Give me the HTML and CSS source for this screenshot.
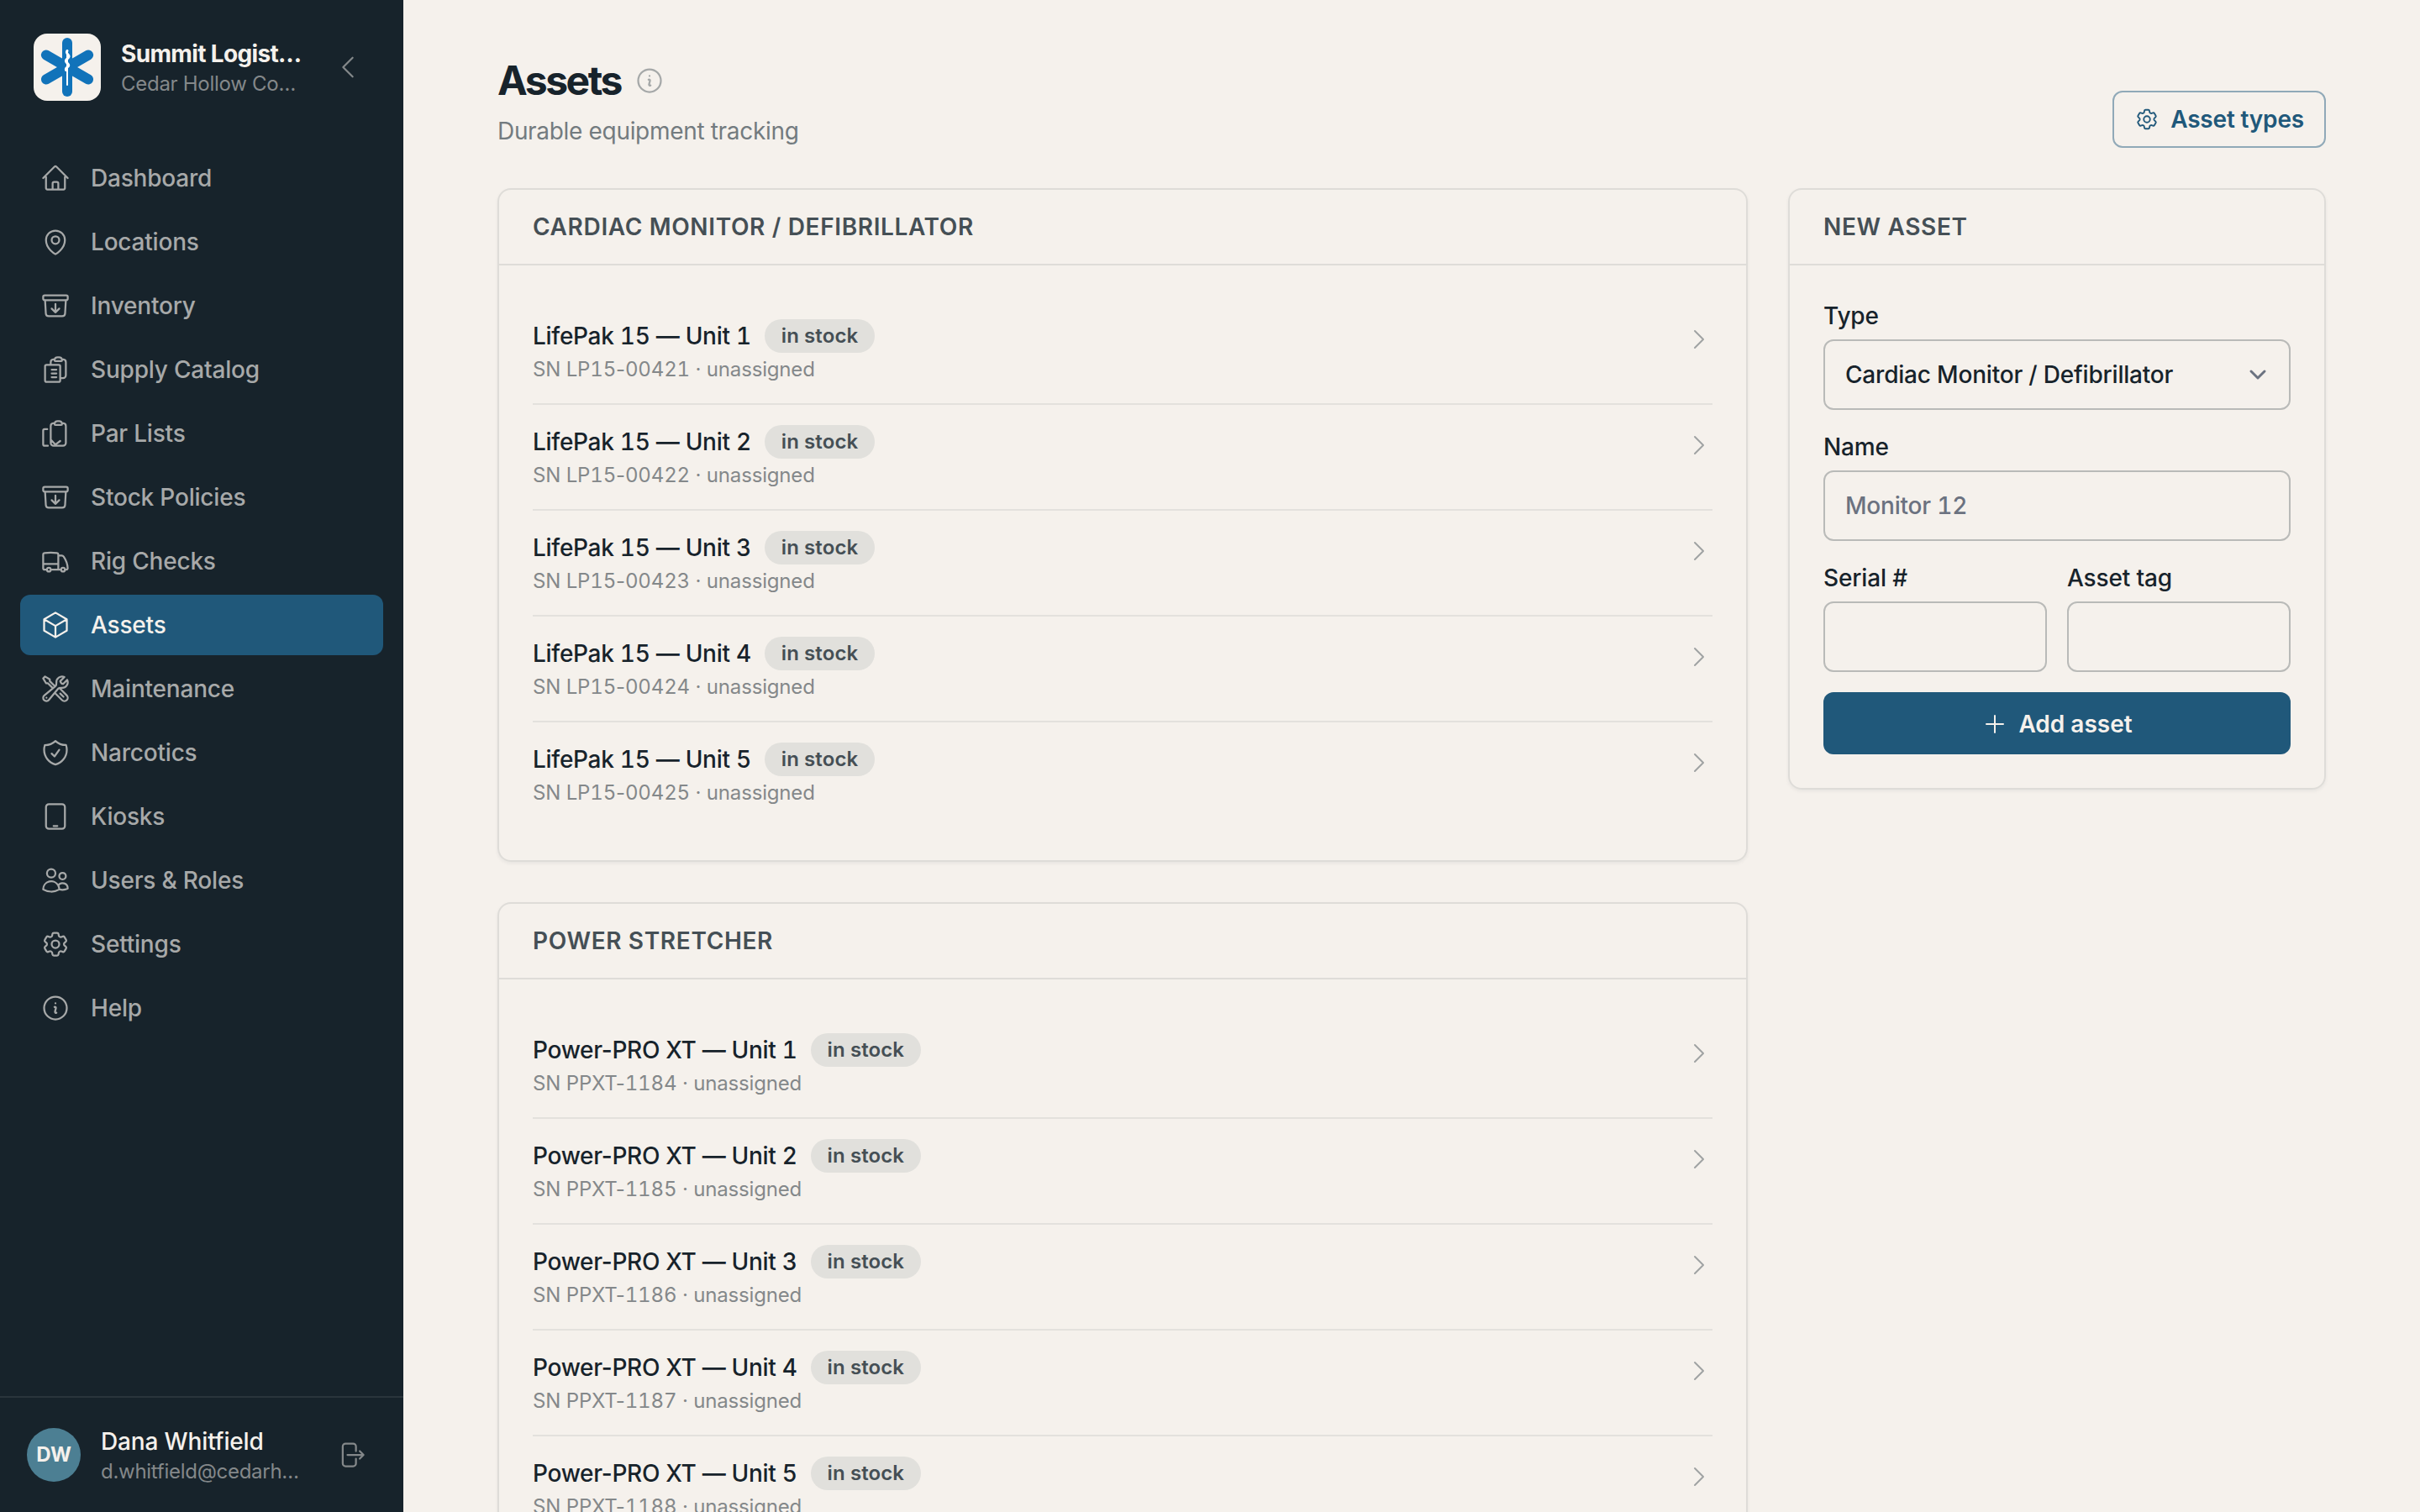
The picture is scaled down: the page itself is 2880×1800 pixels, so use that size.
FILE: index.html
```html
<!DOCTYPE html>
<html lang="en">
<head>
  <meta charset="UTF-8" />
  <meta name="viewport" content="width=device-width, initial-scale=1.0"/>
  <title>Assets</title>
  <link rel="stylesheet" href="styles.css">
</head>
<body>
  <!-- shared icons -->
  <svg class="sprite" aria-hidden="true">
    <symbol id="chevron-right" viewBox="0 0 24 24"><path d="m8.25 4.5 7.5 7.5-7.5 7.5"/></symbol>
    <symbol id="archive" viewBox="0 0 24 24"><path d="m20.25 7.5-.625 10.632a2.25 2.25 0 0 1-2.247 2.118H6.622a2.25 2.25 0 0 1-2.247-2.118L3.75 7.5m8.25 3v6.75m0 0-3-3m3 3 3-3M3.375 7.5h17.25c.621 0 1.125-.504 1.125-1.125v-1.5c0-.621-.504-1.125-1.125-1.125H3.375c-.621 0-1.125.504-1.125 1.125v1.5c0 .621.504 1.125 1.125 1.125Z"/></symbol>
    <symbol id="info" viewBox="0 0 24 24"><path d="m11.25 11.25.041-.02a.75.75 0 0 1 1.063.852l-.708 2.836a.75.75 0 0 0 1.063.853l.041-.021M21 12a9 9 0 1 1-18 0 9 9 0 0 1 18 0Zm-9-3.75h.008v.008H12V8.25Z"/></symbol>
    <symbol id="cog" viewBox="0 0 24 24"><path d="M9.594 3.94c.09-.542.56-.94 1.11-.94h2.593c.55 0 1.02.398 1.11.94l.213 1.281c.063.374.313.686.645.87.074.04.147.083.22.127.325.196.72.257 1.075.124l1.217-.456a1.125 1.125 0 0 1 1.37.49l1.296 2.247a1.125 1.125 0 0 1-.26 1.431l-1.003.827c-.293.241-.438.613-.43.992a7.723 7.723 0 0 1 0 .255c-.008.378.137.75.43.991l1.004.827c.424.35.534.955.26 1.43l-1.298 2.247a1.125 1.125 0 0 1-1.369.491l-1.217-.456c-.355-.133-.75-.072-1.076.124a6.47 6.47 0 0 1-.22.128c-.331.183-.581.495-.644.869l-.213 1.281c-.09.543-.56.94-1.11.94h-2.594c-.55 0-1.019-.398-1.11-.94l-.213-1.281c-.062-.374-.312-.686-.644-.87a6.52 6.52 0 0 1-.22-.127c-.325-.196-.72-.257-1.076-.124l-1.217.456a1.125 1.125 0 0 1-1.369-.49l-1.297-2.247a1.125 1.125 0 0 1 .26-1.431l1.004-.827c.292-.24.437-.613.43-.991a6.932 6.932 0 0 1 0-.255c.007-.38-.138-.751-.43-.992l-1.004-.827a1.125 1.125 0 0 1-.26-1.43l1.297-2.247a1.125 1.125 0 0 1 1.37-.491l1.216.456c.356.133.751.072 1.076-.124.072-.044.146-.086.22-.128.332-.183.582-.495.644-.869l.214-1.28Z"/><path d="M15 12a3 3 0 1 1-6 0 3 3 0 0 1 6 0Z"/></symbol>
  </svg>

  <div class="app">
    <aside class="sidebar">
      <div class="brand">
        <svg class="logo" viewBox="0 0 80 80">
          <g class="star">
            <rect x="34" y="5" width="12" height="70" rx="6"/>
            <rect x="34" y="5" width="12" height="70" rx="6" transform="rotate(60 40 40)"/>
            <rect x="34" y="5" width="12" height="70" rx="6" transform="rotate(-60 40 40)"/>
          </g>
          <path class="staff" d="M40 20v41"/>
          <path class="snake" d="M40 20.5c-1.5 2-.5 3 1 4.500s1.500 3-.5 4.500-3 2.500-1.500 4.500 3.500 2.500 2.500 4.500-4 2-3 5"/>
        </svg>
        <div class="brand-text">
          <div class="brand-name">Summit Logist…</div>
          <div class="brand-sub">Cedar Hollow Co…</div>
        </div>
        <button class="icon-btn"><svg class="icon" viewBox="0 0 24 24"><path d="M15.750 19.500 8.250 12l7.500-7.500"/></svg></button>
      </div>

      <nav class="nav">
        <a class="nav-item"><svg class="icon" viewBox="0 0 24 24"><path d="m2.250 12 8.954-8.955c.44-.439 1.152-.439 1.591 0L21.750 12M4.500 9.750v10.125c0 .621.504 1.125 1.125 1.125H9.750v-4.875c0-.621.504-1.125 1.125-1.125h2.250c.621 0 1.125.504 1.125 1.125V21h4.125c.621 0 1.125-.504 1.125-1.125V9.750M8.250 21h8.250"/></svg>Dashboard</a>
        <a class="nav-item"><svg class="icon" viewBox="0 0 24 24"><path d="M15 10.500a3 3 0 1 1-6 0 3 3 0 0 1 6 0Z"/><path d="M19.500 10.500c0 7.142-7.500 11.250-7.500 11.250S4.500 17.642 4.500 10.500a7.500 7.500 0 1 1 15 0Z"/></svg>Locations</a>
        <a class="nav-item"><svg class="icon"><use href="#archive"/></svg>Inventory</a>
        <a class="nav-item"><svg class="icon" viewBox="0 0 24 24"><path d="M9 12h3.750M9 15h3.750M9 18h3.750m3 .75H18a2.250 2.250 0 0 0 2.250-2.250V6.108c0-1.135-.845-2.098-1.976-2.192a48.424 48.424 0 0 0-1.123-.08m-5.801 0c-.065.21-.1.433-.1.664 0 .414.336.75.75.75h4.500a.75.75 0 0 0 .75-.75 2.250 2.250 0 0 0-.1-.664m-5.800 0A2.251 2.251 0 0 1 13.500 2.250H15c1.012 0 1.867.668 2.150 1.586m-5.800 0c-.376.023-.75.05-1.124.08C9.095 4.010 8.250 4.973 8.250 6.108V8.250m0 0H4.875c-.621 0-1.125.504-1.125 1.125v11.250c0 .621.504 1.125 1.125 1.125h9.750c.621 0 1.125-.504 1.125-1.125V9.375c0-.621-.504-1.125-1.125-1.125H8.250Z"/></svg>Supply Catalog</a>
        <a class="nav-item"><svg class="icon" viewBox="0 0 24 24"><path d="M11.350 3.836c-.065.21-.1.433-.1.664 0 .414.336.75.75.75h4.500a.75.75 0 0 0 .75-.75 2.250 2.250 0 0 0-.1-.664m-5.800 0A2.251 2.251 0 0 1 13.500 2.250H15c1.012 0 1.867.668 2.150 1.586m-5.800 0c-.376.023-.75.05-1.124.08C9.095 4.010 8.250 4.973 8.250 6.108V19.500a2.250 2.250 0 0 0 2.250 2.250H18a2.250 2.250 0 0 0 2.250-2.250V6.108c0-1.135-.845-2.098-1.976-2.192a48.424 48.424 0 0 0-1.124-.08M5.500 8.600H3.375c-.621 0-1.125.504-1.125 1.125v10.900c0 .621.504 1.125 1.125 1.125H6M8.700 17.400l3.200 3.500 3.850-2.900"/></svg>Par Lists</a>
        <a class="nav-item"><svg class="icon"><use href="#archive"/></svg>Stock Policies</a>
        <a class="nav-item"><svg class="icon" viewBox="0 0 24 24"><path d="M8.250 18.750a1.500 1.500 0 0 1-3 0m3 0a1.500 1.500 0 0 0-3 0m3 0h6m-9 0H3.375a1.125 1.125 0 0 1-1.125-1.125V14.250m17.250 4.500a1.500 1.500 0 0 1-3 0m3 0a1.500 1.500 0 0 0-3 0m3 0h1.125c.621 0 1.129-.504 1.090-1.124a17.902 17.902 0 0 0-3.213-9.193 2.056 2.056 0 0 0-1.580-.86H14.250M16.500 18.750h-2.250m0-11.177v-.958c0-.568-.422-1.048-.987-1.106a48.554 48.554 0 0 0-10.026 0 1.106 1.106 0 0 0-.987 1.106v7.635m12-6.677v6.677m0 4.500v-4.500m0 0h-12"/></svg>Rig Checks</a>
        <a class="nav-item active"><svg class="icon" viewBox="0 0 24 24"><path d="m21 7.500-9-5.250L3 7.500m18 0-9 5.250m9-5.250v9l-9 5.250M3 7.500l9 5.250M3 7.500v9l9 5.250m0-9v9"/></svg>Assets</a>
        <a class="nav-item"><svg class="icon" viewBox="0 0 24 24"><path d="M11.420 15.170 17.250 21A2.652 2.652 0 0 0 21 17.250l-5.877-5.877M11.420 15.170l2.496-3.030c.317-.384.74-.626 1.208-.766M11.420 15.170l-4.655 5.653a2.548 2.548 0 1 1-3.586-3.586l6.837-5.630m5.108-.233c.55-.164 1.163-.188 1.743-.14a4.500 4.500 0 0 0 4.486-6.336l-3.276 3.277a3.004 3.004 0 0 1-2.250-2.250l3.276-3.276a4.500 4.500 0 0 0-6.336 4.486c.091 1.076-.071 2.264-.904 2.950l-.102.085m-1.745 1.437L5.909 7.500H4.500L2.250 3.750l1.500-1.500L7.500 4.500v1.409l4.260 4.260m-1.745 1.437 1.745-1.437m6.615 8.206L15.750 15.750M4.867 19.125h.008v.008h-.008v-.008Z"/></svg>Maintenance</a>
        <a class="nav-item"><svg class="icon" viewBox="0 0 24 24"><path d="M9 12.750 11.250 15 15 9.750m-3-7.036A11.959 11.959 0 0 1 3.598 6 11.990 11.990 0 0 0 3 9.749c0 5.592 3.824 10.290 9 11.623 5.176-1.332 9-6.030 9-11.622 0-1.310-.21-2.571-.598-3.751h-.152c-3.196 0-6.100-1.248-8.250-3.285Z"/></svg>Narcotics</a>
        <a class="nav-item"><svg class="icon" viewBox="0 0 24 24"><path d="M10.500 19.500h3m-6.750 2.250h10.500a2.250 2.250 0 0 0 2.250-2.250v-15a2.250 2.250 0 0 0-2.250-2.250H6.750A2.250 2.250 0 0 0 4.500 4.500v15a2.250 2.250 0 0 0 2.250 2.250Z"/></svg>Kiosks</a>
        <a class="nav-item"><svg class="icon" viewBox="0 0 24 24"><path d="M15 19.128a9.380 9.380 0 0 0 2.625.372 9.337 9.337 0 0 0 4.121-.952 4.125 4.125 0 0 0-7.533-2.493M15 19.128v-.003c0-1.113-.285-2.160-.786-3.070M15 19.128v.106A12.318 12.318 0 0 1 8.624 21c-2.331 0-4.512-.645-6.374-1.766l-.001-.109a6.375 6.375 0 0 1 11.964-3.070M12 6.375a3.375 3.375 0 1 1-6.750 0 3.375 3.375 0 0 1 6.750 0Zm8.250 2.250a2.625 2.625 0 1 1-5.250 0 2.625 2.625 0 0 1 5.250 0Z"/></svg>Users &amp; Roles</a>
        <a class="nav-item"><svg class="icon"><use href="#cog"/></svg>Settings</a>
        <a class="nav-item"><svg class="icon"><use href="#info"/></svg>Help</a>
      </nav>

      <div class="user">
        <div class="avatar">DW</div>
        <div class="user-text">
          <div class="user-name">Dana Whitfield</div>
          <div class="user-mail">d.whitfield@cedarh…</div>
        </div>
        <button class="icon-btn"><svg class="icon" viewBox="0 0 24 24"><path d="M15.750 9V5.250A2.250 2.250 0 0 0 13.500 3h-6a2.250 2.250 0 0 0-2.250 2.250v13.500A2.250 2.250 0 0 0 7.500 21h6a2.250 2.250 0 0 0 2.250-2.250V15m3 0 3-3m0 0-3-3m3 3H9"/></svg></button>
      </div>
    </aside>

    <main class="main">
      <header class="page-header">
        <div>
          <h1>Assets <svg class="icon"><use href="#info"/></svg></h1>
          <p>Durable equipment tracking</p>
        </div>
        <button class="btn-outline"><svg class="icon"><use href="#cog"/></svg>Asset types</button>
      </header>

      <div class="columns">
        <div class="groups">
          <section class="card">
            <h2>Cardiac Monitor / Defibrillator</h2>
            <ul class="asset-list">
              <li>
                <div>
                  <div class="asset-name"><span class="num">LifePak 15 — Unit 1</span><span class="pill">in stock</span></div>
                  <div class="asset-sub">SN LP<span class="num">15</span>-<span class="num">00421</span> · unassigned</div>
                </div>
                <svg class="icon"><use href="#chevron-right"/></svg>
              </li>
              <li>
                <div>
                  <div class="asset-name"><span class="num">LifePak 15 — Unit 2</span><span class="pill">in stock</span></div>
                  <div class="asset-sub">SN LP<span class="num">15</span>-<span class="num">00422</span> · unassigned</div>
                </div>
                <svg class="icon"><use href="#chevron-right"/></svg>
              </li>
              <li>
                <div>
                  <div class="asset-name"><span class="num">LifePak 15 — Unit 3</span><span class="pill">in stock</span></div>
                  <div class="asset-sub">SN LP<span class="num">15</span>-<span class="num">00423</span> · unassigned</div>
                </div>
                <svg class="icon"><use href="#chevron-right"/></svg>
              </li>
              <li>
                <div>
                  <div class="asset-name"><span class="num">LifePak 15 — Unit 4</span><span class="pill">in stock</span></div>
                  <div class="asset-sub">SN LP<span class="num">15</span>-<span class="num">00424</span> · unassigned</div>
                </div>
                <svg class="icon"><use href="#chevron-right"/></svg>
              </li>
              <li>
                <div>
                  <div class="asset-name"><span class="num">LifePak 15 — Unit 5</span><span class="pill">in stock</span></div>
                  <div class="asset-sub">SN LP<span class="num">15</span>-<span class="num">00425</span> · unassigned</div>
                </div>
                <svg class="icon"><use href="#chevron-right"/></svg>
              </li>
            </ul>
          </section>

          <section class="card">
            <h2>Power Stretcher</h2>
            <ul class="asset-list">
              <li>
                <div>
                  <div class="asset-name"><span>Power-PRO XT — Unit <span class="num">1</span></span><span class="pill">in stock</span></div>
                  <div class="asset-sub">SN PPXT-<span class="num">1184</span> · unassigned</div>
                </div>
                <svg class="icon"><use href="#chevron-right"/></svg>
              </li>
              <li>
                <div>
                  <div class="asset-name"><span>Power-PRO XT — Unit <span class="num">2</span></span><span class="pill">in stock</span></div>
                  <div class="asset-sub">SN PPXT-<span class="num">1185</span> · unassigned</div>
                </div>
                <svg class="icon"><use href="#chevron-right"/></svg>
              </li>
              <li>
                <div>
                  <div class="asset-name"><span>Power-PRO XT — Unit <span class="num">3</span></span><span class="pill">in stock</span></div>
                  <div class="asset-sub">SN PPXT-<span class="num">1186</span> · unassigned</div>
                </div>
                <svg class="icon"><use href="#chevron-right"/></svg>
              </li>
              <li>
                <div>
                  <div class="asset-name"><span>Power-PRO XT — Unit <span class="num">4</span></span><span class="pill">in stock</span></div>
                  <div class="asset-sub">SN PPXT-<span class="num">1187</span> · unassigned</div>
                </div>
                <svg class="icon"><use href="#chevron-right"/></svg>
              </li>
              <li>
                <div>
                  <div class="asset-name"><span>Power-PRO XT — Unit <span class="num">5</span></span><span class="pill">in stock</span></div>
                  <div class="asset-sub">SN PPXT-<span class="num">1188</span> · unassigned</div>
                </div>
                <svg class="icon"><use href="#chevron-right"/></svg>
              </li>
            </ul>
          </section>
        </div>

        <section class="card">
          <h2>New asset</h2>
          <form class="asset-form">
            <div class="field">
              <label>Type</label>
              <div class="control">Cardiac Monitor / Defibrillator
                <svg class="caret" viewBox="0 0 20 20"><path d="m6 8 4 4 4-4"/></svg>
              </div>
            </div>
            <div class="field">
              <label for="name">Name</label>
              <input class="control" id="name" type="text" placeholder="Monitor 12" />
            </div>
            <div class="field-row">
              <div class="field">
                <label for="serial">Serial #</label>
                <input class="control" id="serial" type="text" />
              </div>
              <div class="field">
                <label for="tag">Asset tag</label>
                <input class="control" id="tag" type="text" />
              </div>
            </div>
            <button class="btn-primary" type="button"><svg class="icon" viewBox="0 0 24 24"><path d="M12 4.500v15m7.500-7.500h-15"/></svg>Add asset</button>
          </form>
        </section>
      </div>
    </main>
  </div>
</body>
</html>
```
FILE: styles.css
```css
* {
  box-sizing: border-box;
}

body {
  margin: 0;
  font-family: Inter, "Liberation Sans", sans-serif;
  font-size: 28px;
  line-height: 40px;
  color: #17232b;
  background: #f5f1ec;
  -webkit-font-smoothing: antialiased;
}

h1, h2, p, ul {
  margin: 0;
  padding: 0;
}

button, input {
  font: inherit;
  color: inherit;
}

.sprite {
  display: none;
}

.icon {
  width: 36px;
  height: 36px;
  flex-shrink: 0;
  fill: none;
  stroke: currentColor;
  stroke-width: 1.5;
  stroke-linecap: round;
  stroke-linejoin: round;
}

.num {
  font-variant-numeric: tabular-nums;
}

.app {
  display: flex;
  height: 100vh;
  overflow: hidden;
}

/* Sidebar */
.sidebar {
  width: 480px;
  flex-shrink: 0;
  display: flex;
  flex-direction: column;
  background: #17232b;
  color: #a7a9a9;
}

.brand {
  display: flex;
  align-items: center;
  gap: 24px;
  padding: 40px 48px 40px 40px;
}

.logo {
  width: 80px;
  height: 80px;
  flex-shrink: 0;
  border-radius: 16px;
  background: #f5f1ec;
}

.star {
  fill: #1173ba;
}

.staff, .snake {
  fill: none;
  stroke: #fff;
  stroke-width: 2;
  stroke-linecap: round;
}

.snake {
  stroke-width: 3;
}

.brand-text, .user-text {
  flex: 1;
  white-space: nowrap;
}

.brand-name {
  color: #f5f1ec;
  font-weight: 700;
  letter-spacing: -0.65px;
}

.brand-sub, .user-mail {
  color: #84888a;
  font-size: 24px;
  line-height: 32px;
  letter-spacing: -0.28px;
}

.icon-btn {
  display: flex;
  padding: 0;
  border: none;
  background: none;
  color: #84888a;
  cursor: pointer;
}

.nav {
  flex: 1;
  display: flex;
  flex-direction: column;
  gap: 4px;
  padding: 16px 24px;
}

.nav-item {
  display: flex;
  align-items: center;
  gap: 24px;
  height: 72px;
  padding: 0 24px;
  border-radius: 12px;
  font-weight: 500;
  letter-spacing: -0.2px;
}

.nav-item.active {
  background: #20587a;
  color: #f5f1ec;
}

.user {
  display: flex;
  align-items: center;
  gap: 24px;
  height: 138px;
  padding: 0 44px 0 32px;
  border-top: 2px solid #2a353c;
}

.user-name {
  color: #f5f1ec;
  font-weight: 500;
  letter-spacing: -0.14px;
}

.avatar {
  width: 64px;
  height: 64px;
  border-radius: 50%;
  background: #4c7f93;
  color: #f5f1ec;
  font-size: 24px;
  font-weight: 700;
  line-height: 64px;
  text-align: center;
}

/* Main area */
.main {
  flex: 1;
  padding: 64px 112px 0;
}

.page-header {
  display: flex;
  justify-content: space-between;
  align-items: flex-end;
  margin-bottom: 48px;
}

.page-header h1 {
  display: flex;
  align-items: center;
  gap: 16px;
  margin-bottom: 8px;
  font-size: 48px;
  line-height: 64px;
  font-weight: 700;
  letter-spacing: -2.5px;
}

.page-header h1 .icon {
  color: #a5a8a8;
}

.page-header p {
  color: #737b7f;
  letter-spacing: -0.32px;
}

.btn-outline {
  display: flex;
  align-items: center;
  gap: 13px;
  height: 68px;
  padding: 0 24px;
  border: 2px solid #90a9b8;
  border-radius: 12px;
  background: none;
  color: #20587a;
  font-weight: 600;
  letter-spacing: -0.18px;
}

.btn-outline .icon {
  width: 30px;
  height: 30px;
}

.columns {
  display: grid;
  grid-template-columns: 1fr 640px;
  gap: 48px;
  align-items: start;
}

.groups {
  display: flex;
  flex-direction: column;
  gap: 48px;
}

.card {
  border: 2px solid #dedcd8;
  border-radius: 16px;
  box-shadow: 0 2px 4px rgba(23, 35, 43, 0.06);
}

.card h2 {
  padding: 24px 40px;
  border-bottom: 2px solid #dedcd8;
  color: #454f55;
  font-size: 28px;
  font-weight: 600;
  letter-spacing: 0.65px;
  text-transform: uppercase;
}

.asset-list {
  padding: 40px;
  list-style: none;
}

.asset-list li {
  display: flex;
  justify-content: space-between;
  padding: 24px 0;
  border-bottom: 2px solid #e3e1dd;
}

.asset-list li:last-child {
  border-bottom: none;
}

.asset-list .icon {
  width: 32px;
  height: 32px;
  margin-top: 8px;
  color: #a0a3a3;
}

.asset-name {
  display: flex;
  align-items: center;
  gap: 16px;
  font-weight: 500;
  letter-spacing: -0.29px;
}

.pill {
  height: 40px;
  padding: 0 20px;
  border-radius: 20px;
  background: #e1e0dc;
  color: #454f55;
  font-size: 24px;
  font-weight: 600;
  letter-spacing: 0.1px;
}

.asset-sub {
  margin-top: 4px;
  color: #84888a;
  font-size: 24px;
  line-height: 32px;
  letter-spacing: -0.17px;
}

/* New asset form */
.asset-form {
  display: flex;
  flex-direction: column;
  gap: 24px;
  padding: 40px;
}

.field {
  display: flex;
  flex-direction: column;
  gap: 8px;
  min-width: 0;
}

.field label {
  font-weight: 500;
  letter-spacing: -0.15px;
}

.field-row {
  display: grid;
  grid-template-columns: 1fr 1fr;
  gap: 24px;
}

.control {
  display: flex;
  justify-content: space-between;
  align-items: center;
  width: 100%;
  height: 84px;
  padding: 0 17px 0 24px;
  border: 2px solid #b9bab8;
  border-radius: 12px;
  background: none;
  font-weight: 500;
  font-variant-numeric: tabular-nums;
  letter-spacing: -0.2px;
}

.control::placeholder {
  color: #6b7280;
}

.caret {
  width: 40px;
  height: 40px;
  fill: none;
  stroke: #6b7280;
  stroke-width: 1.5;
  stroke-linecap: round;
  stroke-linejoin: round;
}

.btn-primary {
  display: flex;
  justify-content: center;
  align-items: center;
  gap: 12px;
  height: 74px;
  padding: 2px 0 0;
  border: none;
  border-radius: 12px;
  background: #20587a;
  color: #f5f1ec;
  font-weight: 600;
}

.btn-primary .icon {
  width: 32px;
  height: 32px;
}
```
